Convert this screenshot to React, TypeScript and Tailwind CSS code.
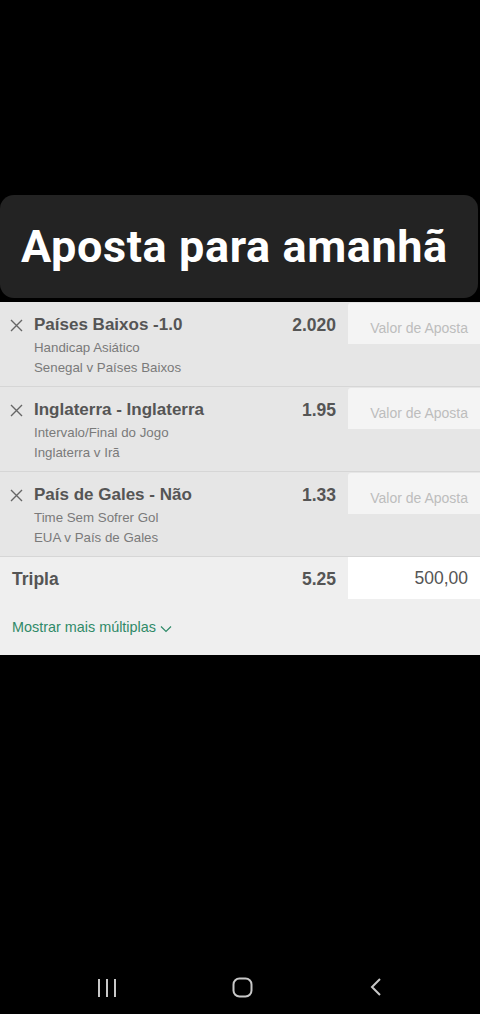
import React from 'react';

type Bet = { pick: string; market: string; event: string; odds: string };

const bets: Bet[] = [
  { pick: 'Países Baixos -1.0', market: 'Handicap Asiático', event: 'Senegal v Países Baixos', odds: '2.020' },
  { pick: 'Inglaterra - Inglaterra', market: 'Intervalo/Final do Jogo', event: 'Inglaterra v Irã', odds: '1.95' },
  { pick: 'País de Gales - Não', market: 'Time Sem Sofrer Gol', event: 'EUA v País de Gales', odds: '1.33' },
];

function CloseIcon() {
  return (
    <svg width="13" height="13" viewBox="0 0 13 13" className="shrink-0">
      <path d="M1 1L12 12M12 1L1 12" stroke="#666" strokeWidth="1.4" />
    </svg>
  );
}

function BetRow({ bet }: { bet: Bet }) {
  return (
    <div className="flex h-[85px] border-b border-[#d6d6d6] bg-[#e6e6e6]">
      <div className="flex flex-1 pl-[10px] pt-[13px]">
        <div className="pt-[4px]">
          <CloseIcon />
        </div>
        <div className="ml-[11px] flex-1">
          <div className="flex items-start justify-between pr-[12px]">
            <span className="text-[17px] font-bold leading-[20px] text-[#555]">{bet.pick}</span>
            <span className="text-[17.5px] font-bold leading-[20px] text-[#555]">{bet.odds}</span>
          </div>
          <div className="mt-[3px] text-[13.3px] leading-[20px] text-[#7a7a7a]">{bet.market}</div>
          <div className="text-[13.3px] leading-[20px] text-[#7a7a7a]">{bet.event}</div>
        </div>
      </div>
      <div className="w-[132px] pt-[1px]">
        <div className="flex h-[41px] items-center justify-end rounded-tl-[3px] bg-[#f4f4f4] pr-[12px] pt-[10px] text-[14px] text-[#bdbdbd]">
          Valor de Aposta
        </div>
      </div>
    </div>
  );
}

export default function App() {
  return (
    <div
      className="flex h-[1014px] w-[480px] flex-col bg-black"
      style={{ fontFamily: '"Liberation Sans", Arial, sans-serif' }}
    >
      <div className="h-[195px]" />
      <div
        className="mr-[2px] flex h-[103px] items-center rounded-[14px] bg-[#232323] pl-[21px]"
        style={{ fontFamily: 'Roboto, sans-serif' }}
      >
        <span className="text-[45px] font-bold leading-none tracking-[0.6px] text-white">Aposta para amanhã</span>
      </div>
      <div className="h-[4px]" />
      <div className="flex flex-col bg-[#efefef]">
        {bets.map((b) => (
          <BetRow key={b.pick} bet={b} />
        ))}
        <div className="flex h-[44px] items-start">
          <div className="flex h-[44px] flex-1 items-center justify-between pl-[12px] pr-[144px]">
            <span className="text-[17.5px] font-bold text-[#555]">Tripla</span>
            <span className="text-[17.5px] font-bold text-[#555]">5.25</span>
          </div>
        </div>
        <div className="relative -mt-[44px] ml-auto flex h-[42px] w-[132px] items-center justify-end bg-white pr-[12px] text-[17.5px] text-[#555]">
          500,00
        </div>
        <div className="flex h-[56px] items-center pl-[12px] pt-[1px] text-[14.4px] text-[#2f8a68]">
          Mostrar mais múltiplas
          <svg width="12" height="8" viewBox="0 0 12 8" className="ml-[4px] mt-[3px]">
            <path d="M1 1.5L6 6.5L11 1.5" stroke="#2f8a68" strokeWidth="1.2" fill="none" />
          </svg>
        </div>
      </div>
      <div className="flex-1" />
      <div className="flex h-[60px] items-start justify-between pl-[97px] pr-[98px] pt-[24px]">
        <svg width="22" height="20" viewBox="0 0 22 20">
          <path d="M2 1V19M10 1V19M18 1V19" stroke="#c8c8c8" strokeWidth="2" />
        </svg>
        <svg width="21" height="21" viewBox="0 0 21 21" className="-mt-[1px] -ml-[4px]">
          <rect x="1.5" y="1.5" width="18" height="18" rx="6" stroke="#c8c8c8" strokeWidth="2" fill="none" />
        </svg>
        <svg width="12" height="18" viewBox="0 0 12 18">
          <path d="M10 1L2 9L10 17" stroke="#c8c8c8" strokeWidth="2" fill="none" />
        </svg>
      </div>
    </div>
  );
}
